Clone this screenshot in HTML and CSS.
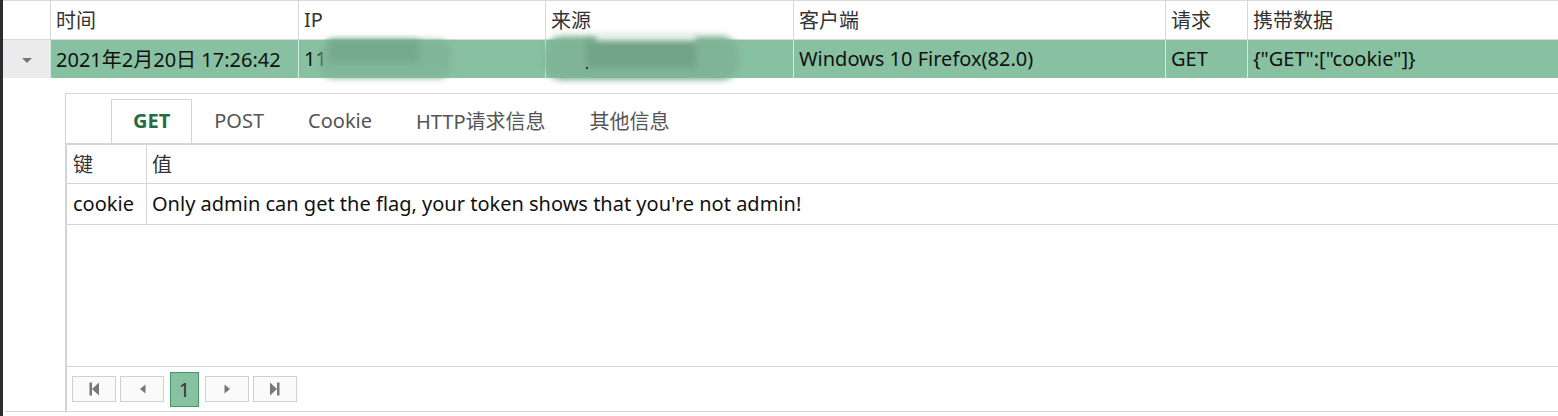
FILE: index.html
```html
<!DOCTYPE html>
<html lang="zh">
<head>
<meta charset="utf-8">
<title>Log</title>
<link rel="stylesheet" href="styles.css">
</head>
<body>
<div class="edge"></div>
<div class="main">
  <div class="row head">
    <div class="cell exp"></div>
    <div class="cell">时间</div>
    <div class="cell">IP</div>
    <div class="cell">来源</div>
    <div class="cell">客户端</div>
    <div class="cell">请求</div>
    <div class="cell">携带数据</div>
  </div>
  <div class="row data">
    <div class="cell exp"><span class="caret"></span></div>
    <div class="cell">2021年2月20日 17:26:42</div>
    <div class="cell masked">11<span class="blur blur-ip"></span><span class="blur blur-ip2"></span></div>
    <div class="cell masked"><span class="blur blur-src"></span><span class="blur blur-src3"></span><span class="blur blur-src2"></span><span class="dot"></span></div>
    <div class="cell">Windows 10 Firefox(82.0)</div>
    <div class="cell">GET</div>
    <div class="cell">{"GET":["cookie"]}</div>
  </div>
  <div class="detail">
    <div class="panel">
      <div class="tabs">
        <div class="tab active">GET</div>
        <div class="tab">POST</div>
        <div class="tab">Cookie</div>
        <div class="tab">HTTP请求信息</div>
        <div class="tab">其他信息</div>
      </div>
      <div class="kv">
        <div class="kv-row kv-head">
          <div class="k">键</div>
          <div class="v">值</div>
        </div>
        <div class="kv-row kv-item">
          <div class="k">cookie</div>
          <div class="v">Only admin can get the flag, your token shows that you're not admin!</div>
        </div>
        <div class="kv-fill"></div>
        <div class="pager">
          <div class="pbtn"><svg width="10" height="14" viewBox="0 0 10 14"><rect x="0.5" y="0.5" width="2.5" height="13" fill="#777"/><path d="M10 0.5 L3 7 L10 13.5 Z" fill="#777"/></svg></div>
          <div class="pbtn"><svg width="7" height="10" viewBox="0 0 7 10"><path d="M6.5 0.5 L1 5 L6.5 9.5 Z" fill="#777"/></svg></div>
          <div class="pbtn cur">1</div>
          <div class="pbtn"><svg width="7" height="10" viewBox="0 0 7 10"><path d="M0.5 0.5 L6 5 L0.5 9.5 Z" fill="#777"/></svg></div>
          <div class="pbtn"><svg width="10" height="14" viewBox="0 0 10 14"><path d="M0 0.5 L7 7 L0 13.5 Z" fill="#777"/><rect x="7" y="0.5" width="2.5" height="13" fill="#777"/></svg></div>
        </div>
      </div>
    </div>
  </div>
</div>
</body>
</html>
```
FILE: styles.css
```css
* { box-sizing: border-box; }
html, body { margin: 0; padding: 0; }
body {
  display: flex;
  width: 1558px;
  height: 416px;
  overflow: hidden;
  background: #fff;
  font-family: "Noto Sans", "Noto Sans CJK SC", sans-serif;
  font-size: 20px;
  color: #111;
}
.edge { width: 3px; flex: none; background: #2b2b30; }
.main { flex: 1; min-width: 0; }

.row {
  display: grid;
  grid-template-columns: 48px 248px 247px 248px 372px 82px 1fr;
}
.head { height: 40px; border-top: 1px solid #d8d8d8; border-bottom: 1px solid #d8d8d8; color: #333; }
.data { height: 38px; background: #87c1a1; }
.cell {
  border-right: 1px solid #d8d8d8;
  padding: 0 0 2px 5px;
  display: flex;
  align-items: center;
  white-space: nowrap;
  overflow: hidden;
}
.cell:last-child { border-right: none; }
.data .cell { border-right-color: #d6e9de; }
.data .exp { background: #ebebeb; justify-content: center; padding: 0; }
.caret {
  width: 0; height: 0;
  border-left: 5px solid transparent;
  border-right: 5px solid transparent;
  border-top: 5px solid #777;
  margin-top: 2px;
}
.masked { position: relative; overflow: visible; }
.blur { position: absolute; filter: blur(3px); }
.blur-ip { left: 22px; top: 0; width: 130px; height: 38px; background: #80b698; border-radius: 12px; }
.blur-ip2 { left: 30px; top: 0; width: 90px; height: 22px; background: #75a98b; }
.blur-src { left: -2px; top: -4px; width: 195px; height: 44px; background: #80b497; border-radius: 18px; }
.blur-src3 { left: 40px; top: 0; width: 110px; height: 28px; background: #72a488; }
.blur-src2 { left: 50px; top: -8px; width: 100px; height: 8px; background: #f2f5f3; }
.dot { position: absolute; left: 40px; top: 27px; width: 2px; height: 2px; background: #333; }

.detail {
  height: 334px;
  margin-left: 2px;
  padding: 15px 0 0 60px;
  border-bottom: 1px solid #d4d4d4;
}
.panel {
  height: 318px;
  border-top: 1px solid #d4d4d4;
  border-left: 1px solid #d4d4d4;
  display: flex;
  flex-direction: column;
}
.tabs {
  height: 51px;
  flex: none;
  display: flex;
  align-items: flex-end;
  padding-left: 45px;
  border-bottom: 2px solid #d4d4d4;
}
.tab {
  height: 44px;
  padding: 0 21px 3px;
  display: flex;
  align-items: center;
  color: #555;
  border: 1px solid transparent;
  border-bottom: none;
}
.tab.active {
  color: #1f6f45;
  font-weight: 700;
  background: #fff;
  border-color: #d4d4d4;
}
.kv {
  flex: 1;
  display: flex;
  flex-direction: column;
  border-left: 1px solid #d4d4d4;
}
.kv-row { display: flex; border-bottom: 1px solid #d4d4d4; }
.kv-head { height: 39px; color: #333; }
.kv-item { height: 41px; }
.k {
  width: 80px;
  flex: none;
  border-right: 1px solid #d4d4d4;
  padding: 0 0 2px 6px;
  display: flex;
  align-items: center;
}
.v { padding: 0 0 2px 5px; display: flex; align-items: center; white-space: nowrap; }
.kv-fill { flex: 1; }
.pager {
  height: 45px;
  flex: none;
  border-top: 1px solid #d4d4d4;
  display: flex;
  align-items: center;
  gap: 4px;
  padding-left: 5px;
}
.pbtn {
  width: 44px;
  height: 26px;
  background: #fafafa;
  border: 1px solid #d0d0d0;
  display: flex;
  align-items: center;
  justify-content: center;
}
.pbtn.cur {
  width: 29px;
  height: 35px;
  margin: 0 2px;
  background: #87c1a1;
  border-color: #3f9a68;
  color: #333;
  font-size: 20px;
}
```
